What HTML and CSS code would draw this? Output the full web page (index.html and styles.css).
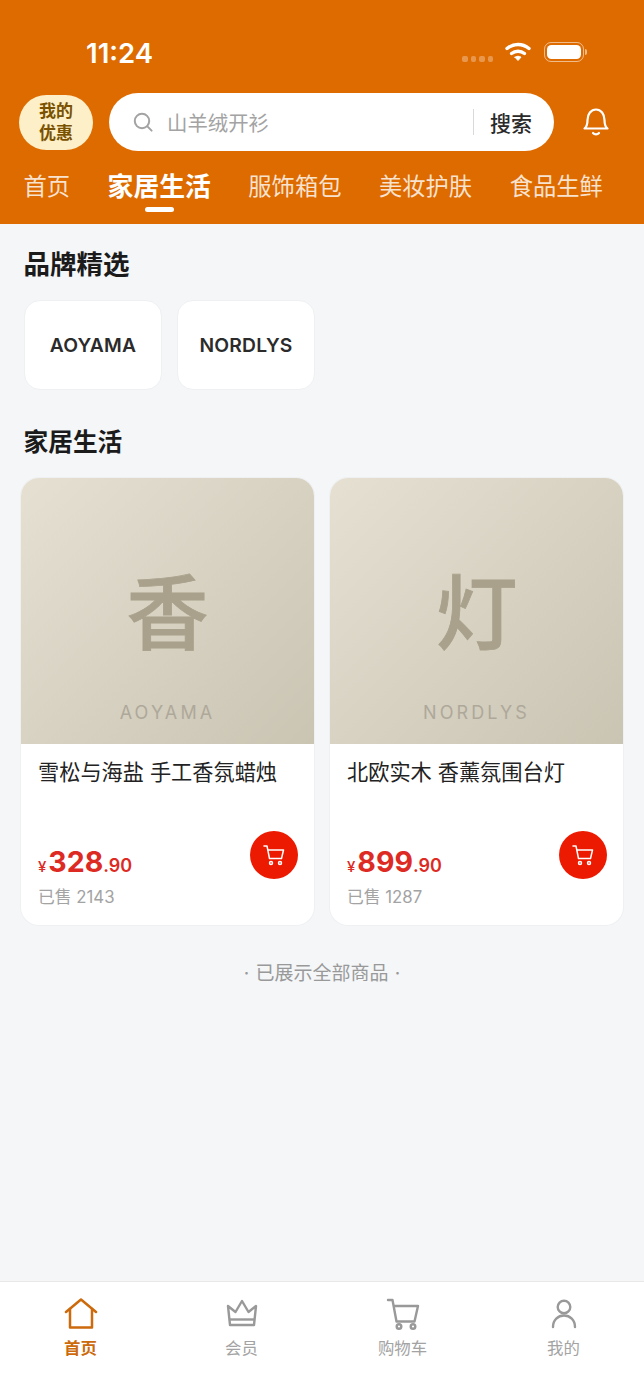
FILE: index.html
```html
<!DOCTYPE html>
<html lang="zh-CN">
<head>
<meta charset="utf-8">
<title>家居生活</title>
<link rel="stylesheet" href="styles.css">
</head>
<body>
<div class="app">
  <header class="header">
    <div class="status">
      <span class="time">11:24</span>
      <div class="status-icons">
        <span class="dots"><i></i><i></i><i></i><i></i></span>
        <svg class="wifi" width="26" height="20" viewBox="0 0 26 20" fill="none" stroke="#fff" stroke-width="3.400" stroke-linecap="round"><path d="M2 6.500C8.500 1.200 17.500 1.200 24 6.500"/><path d="M6.500 11.500C10.300 8.500 15.700 8.500 19.500 11.500"/><path d="M10 15.200 13 18.500 16 15.200C14.200 13.900 11.800 13.900 10 15.200Z" fill="#fff" stroke-width="1"/></svg>
        <span class="battery"><span class="battery-fill"></span></span>
        <span class="battery-cap"></span>
      </div>
    </div>
    <div class="search-row">
      <div class="promo">我的<br>优惠</div>
      <div class="search">
        <svg class="search-icon" width="22" height="22" viewBox="0 0 22 22" fill="none" stroke="#a3a3a3" stroke-width="2" stroke-linecap="round"><circle cx="10" cy="10" r="7.200"/><path d="M15.400 15.400 19.600 19.600"/></svg>
        <span class="placeholder">山羊绒开衫</span>
        <span class="divider"></span>
        <span class="search-btn">搜索</span>
      </div>
      <svg class="bell" width="28" height="30" viewBox="0 0 28 30" fill="none" stroke="#fff" stroke-width="2.200" stroke-linecap="round" stroke-linejoin="round"><path d="M2.500 21.500C5 19.500 5.500 17.500 5.500 13C5.500 7 9 2.500 14 2.500S22.500 7 22.500 13C22.500 17.500 23 19.500 25.500 21.500Z"/><path d="M11 26C12.500 27.800 15.500 27.800 17 26"/></svg>
    </div>
    <nav class="tabs">
      <span class="tab">首页</span>
      <span class="tab tab-active">家居生活</span>
      <span class="tab">服饰箱包</span>
      <span class="tab">美妆护肤</span>
      <span class="tab">食品生鲜</span>
    </nav>
  </header>

  <main class="main">
    <h2 class="heading heading-brand">品牌精选</h2>
    <div class="brands">
      <div class="brand">AOYAMA</div>
      <div class="brand">NORDLYS</div>
    </div>
    <h2 class="heading heading-cat">家居生活</h2>
    <div class="products">
      <article class="card">
        <div class="thumb">
          <span class="thumb-char">香</span>
          <span class="thumb-brand">AOYAMA</span>
        </div>
        <div class="info">
          <div class="name">雪松与海盐 手工香氛蜡烛</div>
          <div class="bottom">
            <div>
              <div class="price"><span class="yen">¥</span><span class="int">328</span><span class="dec">.90</span></div>
              <div class="sold">已售 2143</div>
            </div>
            <button class="add" type="button" aria-label="加入购物车">
              <svg width="24" height="24" viewBox="0 0 24 24" fill="none" stroke="#fff" stroke-width="1.500" stroke-linecap="round" stroke-linejoin="round"><path d="M2 3H5L7.500 15.500H19.500L21.500 7H5.800"/><circle cx="9" cy="20" r="1.500"/><circle cx="18" cy="20" r="1.500"/></svg>
            </button>
          </div>
        </div>
      </article>
      <article class="card">
        <div class="thumb">
          <span class="thumb-char">灯</span>
          <span class="thumb-brand">NORDLYS</span>
        </div>
        <div class="info">
          <div class="name">北欧实木 香薰氛围台灯</div>
          <div class="bottom">
            <div>
              <div class="price"><span class="yen">¥</span><span class="int">899</span><span class="dec">.90</span></div>
              <div class="sold">已售 1287</div>
            </div>
            <button class="add" type="button" aria-label="加入购物车">
              <svg width="24" height="24" viewBox="0 0 24 24" fill="none" stroke="#fff" stroke-width="1.500" stroke-linecap="round" stroke-linejoin="round"><path d="M2 3H5L7.500 15.500H19.500L21.500 7H5.800"/><circle cx="9" cy="20" r="1.500"/><circle cx="18" cy="20" r="1.500"/></svg>
            </button>
          </div>
        </div>
      </article>
    </div>
    <p class="end">· 已展示全部商品 ·</p>
  </main>

  <footer class="tabbar">
    <div class="bar-item bar-active">
      <svg width="34" height="32" viewBox="0 0 34 32" fill="none" stroke="#cc6a0c" stroke-width="2.500" stroke-linecap="round" stroke-linejoin="round"><path d="M2 14 17 1.500 32 14"/><path d="M6 11V29.500H28V11"/></svg>
      <span>首页</span>
    </div>
    <div class="bar-item">
      <svg width="34" height="32" viewBox="0 0 34 32" fill="none" stroke="#999" stroke-width="2.400" stroke-linejoin="round"><path d="M3 8 10.500 14 17 3 23.500 14 31 8 29 27H5Z"/><path d="M4.500 21.500H29.500"/></svg>
      <span>会员</span>
    </div>
    <div class="bar-item">
      <svg width="34" height="32" viewBox="0 0 34 32" fill="none" stroke="#999" stroke-width="2.400" stroke-linecap="round" stroke-linejoin="round"><path d="M2 2H6.500L10.500 23.500H28.500L32 8H8"/><circle cx="13" cy="28.500" r="2.300"/><circle cx="27" cy="28.500" r="2.300"/></svg>
      <span>购物车</span>
    </div>
    <div class="bar-item">
      <svg width="34" height="32" viewBox="0 0 34 32" fill="none" stroke="#999" stroke-width="2.400" stroke-linecap="round"><circle cx="17" cy="9" r="6.300"/><path d="M6 29C6 22 11 17.500 17 17.500S28 22 28 29"/></svg>
      <span>我的</span>
    </div>
  </footer>
</div>
</body>
</html>
```
FILE: styles.css
```css
* { box-sizing: border-box; }
html, body { margin: 0; padding: 0; }
body {
  font-family: Inter, "Noto Sans CJK SC", "Noto Sans", sans-serif;
  background: #f4f6f8;
}
.app {
  width: 644px;
  height: 1400px;
  display: flex;
  flex-direction: column;
  overflow: hidden;
  background: #f4f6f8;
}

/* Header */
.header {
  height: 224px;
  flex: none;
  background: #de6b00;
  display: flex;
  flex-direction: column;
}
.status {
  height: 93px;
  padding: 38px 57px 0 86px;
  display: flex;
  justify-content: space-between;
  align-items: flex-start;
}
.time {
  color: #fff;
  font-size: 27.500px;
  font-weight: 600;
  line-height: 30px;
}
.status-icons {
  display: flex;
  align-items: center;
  height: 28px;
}
.dots { display: flex; gap: 3px; margin: 14px 12px 0 0; }
.dots i {
  width: 5.500px;
  height: 5.500px;
  border-radius: 2px;
  background: rgba(255, 255, 255, 0.3);
}
.wifi { margin: -1px 13px 0 0; }
.battery {
  width: 40px;
  height: 20px;
  border: 1.500px solid rgba(255, 255, 255, 0.55);
  border-radius: 7px;
  padding: 2px;
  display: flex;
}
.battery-fill { flex: 1; background: #fff; border-radius: 4.500px; }
.battery-cap {
  width: 2px;
  height: 6px;
  margin-left: 1px;
  border-radius: 0 2px 2px 0;
  background: rgba(255, 255, 255, 0.55);
}
.search-row {
  height: 58px;
  display: flex;
  align-items: center;
  padding-left: 19px;
}
.promo {
  width: 74px;
  height: 55px;
  border-radius: 28px;
  background: #fdefc8;
  color: #7a5200;
  font-size: 17px;
  font-weight: 700;
  line-height: 22.500px;
  text-align: center;
  padding-top: 5px;
  margin-right: 16px;
}
.search {
  width: 445px;
  height: 58px;
  border-radius: 29px;
  background: #fff;
  display: flex;
  align-items: center;
  padding-left: 23px;
}
.search-icon { flex: none; }
.placeholder {
  margin-left: 13px;
  font-size: 20.400px;
  color: #a3a3a3;
  width: 306px;
}
.divider { width: 1px; height: 26px; background: #d9d9d9; }
.search-btn {
  margin-left: 16px;
  font-size: 21px;
  font-weight: 500;
  color: #2a2a2a;
}
.bell { margin-left: 28px; }
.tabs {
  display: flex;
  align-items: center;
  padding: 13px 0 0 23.500px;
  gap: 37.500px;
}
.tab {
  position: relative;
  color: rgba(255, 255, 255, 0.82);
  font-size: 23.300px;
  line-height: 46px;
  white-space: nowrap;
}
.tab-active {
  color: #fff;
  font-size: 25.800px;
  font-weight: 700;
}
.tab-active::after {
  content: "";
  position: absolute;
  left: 50%;
  bottom: -2px;
  width: 29px;
  height: 5px;
  margin-left: -14.500px;
  border-radius: 3px;
  background: #fff;
}

/* Main */
.main { flex: 1; min-height: 0; }
.heading {
  margin: 0;
  color: #1b1b1b;
  font-weight: 700;
  padding-left: 23.500px;
}
.heading-brand { font-size: 26.500px; line-height: 36px; padding-top: 22px; height: 58px; }
.heading-cat { font-size: 24.700px; line-height: 36px; padding-top: 34px; height: 88px; }
.brands { display: flex; gap: 15px; padding: 18px 0 0 24px; height: 108px; }
.brand {
  width: 138px;
  height: 90px;
  border-radius: 16px;
  background: #fff;
  border: 1px solid #eef0f2;
  display: flex;
  align-items: center;
  justify-content: center;
  font-size: 19.300px;
  font-weight: 600;
  color: #2b2b2b;
  letter-spacing: 0.2px;
}
.products {
  display: flex;
  gap: 16px;
  padding: 0 21px;
}
.card {
  width: 293px;
  height: 447px;
  border-radius: 18px;
  background: #fff;
  box-shadow: 0 0 0 1px #eef0f2;
  overflow: hidden;
  display: flex;
  flex-direction: column;
}
.thumb {
  height: 266px;
  flex: none;
  background: linear-gradient(135deg, #e6e0d3, #cac4b3);
  display: flex;
  flex-direction: column;
  align-items: center;
}
.thumb-char {
  margin-top: 81px;
  font-size: 82px;
  line-height: 110px;
  font-weight: 500;
  -webkit-text-stroke: 0.8px #a9a18b;
  color: #a9a18b;
}
.thumb-brand {
  margin-top: 32px;
  font-size: 18px;
  line-height: 24px;
  letter-spacing: 3.100px;
  color: #aea89a;
}
.info {
  flex: 1;
  padding: 12px 16px 0 17px;
  display: flex;
  flex-direction: column;
}
.name {
  font-size: 21.200px;
  line-height: 32px;
  color: #222;
  white-space: pre;
}
.bottom {
  display: flex;
  justify-content: space-between;
  align-items: flex-start;
  margin-top: 43px;
}
.price {
  margin-top: 12px;
  color: #dd2b24;
  font-weight: 600;
  line-height: 38px;
  height: 38px;
  white-space: nowrap;
}
.yen { font-size: 15px; font-weight: 500; margin-right: 2px; }
.int { font-size: 28.500px; font-weight: 700; }
.dec { font-size: 18px; font-weight: 600; }
.sold {
  font-size: 16.800px;
  line-height: 24px;
  margin-top: 4px;
  color: #a3a3a3;
}
.add {
  width: 48px;
  height: 48px;
  flex: none;
  border: 0;
  padding: 0;
  border-radius: 50%;
  background: #ec1a00;
  display: flex;
  align-items: center;
  justify-content: center;
}
.end {
  margin: 36px 0 0;
  text-align: center;
  font-size: 19px;
  line-height: 26px;
  word-spacing: 1px;
  color: #999;
}

/* Tab bar */
.tabbar {
  height: 119px;
  flex: none;
  background: #fff;
  border-top: 1px solid #e8e8e8;
  display: flex;
  justify-content: space-between;
  padding: 16px 0 0;
}
.bar-item {
  flex: 1;
  display: flex;
  flex-direction: column;
  align-items: center;
  color: #a3a3a3;
  font-size: 16.400px;
  line-height: 24px;
}
.bar-item svg { flex: none; }
.bar-item span { margin-top: 6px; }
.bar-active { color: #cc6a0c; font-weight: 700; }
```
